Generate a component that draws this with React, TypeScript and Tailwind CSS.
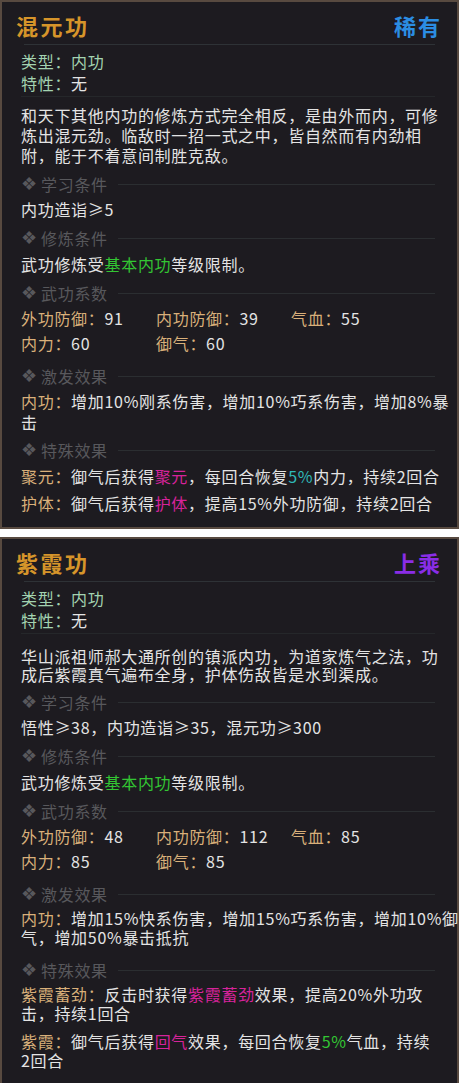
import React from "react";

const tan = "text-[#d9b07a]";
const pink = "text-[#d6239a]";

const SectionTitle = ({ title, className = "mt-[9px]" }: { title: string; className?: string }) => (
  <div className={`flex items-center h-[20px] text-[#58585c] ${className}`}>
    <span className="w-[20px] text-[18px] leading-[20px] font-['DejaVu_Sans',sans-serif]">❖</span>
    <span className="text-[16px] tracking-[0.7px]">{title}</span>
    <div className="flex-1 h-px bg-[#2b2e31] ml-[10px] mr-[5px]"></div>
  </div>
);

const Stats = ({ rows }: { rows: [string, string][] }) => (
  <div className="grid grid-cols-[135px_135px_1fr] gap-y-[5px] leading-[20px] mt-[5px] mb-[4px]">
    {rows.map(([k, v]) => (
      <div key={k} className="whitespace-nowrap">
        <span className={tan}>{k}：</span>
        <span className="text-[#e4e4e4]">{v}</span>
      </div>
    ))}
  </div>
);

const Card = ({
  title,
  grade,
  gradeColor,
  children,
}: {
  title: string;
  grade: string;
  gradeColor: string;
  children: React.ReactNode;
}) => (
  <div className="flex flex-col border-2 border-[#584a40] bg-[#1d1b20] pt-[9px] pb-[14px] pl-[19px] pr-[17px] text-[16px] tracking-[0.7px] text-[#e4e4e4] font-['Noto_Sans_CJK_SC','Noto_Sans',sans-serif]">
    <div className="flex justify-between items-center h-[28px] -ml-[5px] mr-[-2px]">
      <span className="text-[22px] font-bold tracking-[2.5px] text-[#d6952a]">{title}</span>
      <span className={`text-[22px] font-bold tracking-[2px] ${gradeColor}`}>{grade}</span>
    </div>
    <div className="h-px bg-[#2e3236] mt-[5px] ml-[3px] mr-[5px]"></div>
    <div className="mt-[5px] leading-[22px] text-[#a3d3b0]">
      <div>类型：内功</div>
      <div>
        特性：<span className="text-[#e4e4e4]">无</span>
      </div>
    </div>
    <div className="h-px bg-[#25272a] mt-[2px] mr-[5px]"></div>
    {children}
  </div>
);

export default function App() {
  return (
    <div className="w-[459px] bg-white flex flex-col gap-[8px]">
      <Card title="混元功" grade="稀有" gradeColor="text-[#2b8de2]">
        <p className="mt-[8px] leading-[20px] whitespace-nowrap">
          和天下其他内功的修炼方式完全相反，是由外而内，可修
          <br />
          炼出混元劲。临敌时一招一式之中，皆自然而有内劲相
          <br />
          附，能于不着意间制胜克敌。
        </p>
        <SectionTitle title="学习条件" />
        <p className="mt-[5px] leading-[20px]">内功造诣≥5</p>
        <SectionTitle title="修炼条件" />
        <p className="mt-[6px] leading-[20px]">
          武功修炼受<span className="text-[#33c633]">基本内功</span>等级限制。
        </p>
        <SectionTitle title="武功系数" />
        <Stats
          rows={[
            ["外功防御", "91"],
            ["内功防御", "39"],
            ["气血", "55"],
            ["内力", "60"],
            ["御气", "60"],
          ]}
        />
        <SectionTitle title="激发效果" />
        <p className="mt-[5px] leading-[21px] whitespace-nowrap">
          <span className={tan}>内功：</span>增加10%刚系伤害，增加10%巧系伤害，增加8%暴
          <br />击
        </p>
        <SectionTitle title="特殊效果" className="mt-[7px]" />
        <div className="mt-[6px] flex flex-col gap-[7px] leading-[20px] whitespace-nowrap">
          <p>
            <span className={tan}>聚元：</span>御气后获得<span className={pink}>聚元</span>，每回合恢复
            <span className="text-[#2fb8b8]">5%</span>内力，持续2回合
          </p>
          <p>
            <span className={tan}>护体：</span>御气后获得<span className={pink}>护体</span>，提高15%外功防御，持续2回合
          </p>
        </div>
      </Card>

      <Card title="紫霞功" grade="上乘" gradeColor="text-[#8a2de6]">
        <p className="mt-[13px] leading-[18px] whitespace-nowrap">
          华山派祖师郝大通所创的镇派内功，为道家炼气之法，功
          <br />
          成后紫霞真气遍布全身，护体伤敌皆是水到渠成。
        </p>
        <SectionTitle title="学习条件" />
        <p className="mt-[5px] leading-[20px]">悟性≥38，内功造诣≥35，混元功≥300</p>
        <SectionTitle title="修炼条件" />
        <p className="mt-[6px] leading-[20px]">
          武功修炼受<span className="text-[#33c633]">基本内功</span>等级限制。
        </p>
        <SectionTitle title="武功系数" />
        <Stats
          rows={[
            ["外功防御", "48"],
            ["内功防御", "112"],
            ["气血", "85"],
            ["内力", "85"],
            ["御气", "85"],
          ]}
        />
        <SectionTitle title="激发效果" />
        <p className="mt-[5px] mb-[4px] leading-[19px] whitespace-nowrap">
          <span className={tan}>内功：</span>增加15%快系伤害，增加15%巧系伤害，增加10%御
          <br />
          气，增加50%暴击抵抗
        </p>
        <SectionTitle title="特殊效果" />
        <div className="mt-[5px] flex flex-col gap-[9px] leading-[19px] whitespace-nowrap">
          <p>
            <span className={tan}>紫霞蓄劲：</span>反击时获得<span className={pink}>紫霞蓄劲</span>效果，提高20%外功攻
            <br />
            击，持续1回合
          </p>
          <p>
            <span className={tan}>紫霞：</span>御气后获得<span className={pink}>回气</span>效果，每回合恢复
            <span className="text-[#33c633]">5%</span>气血，持续
            <br />
            2回合
          </p>
        </div>
      </Card>
    </div>
  );
}
